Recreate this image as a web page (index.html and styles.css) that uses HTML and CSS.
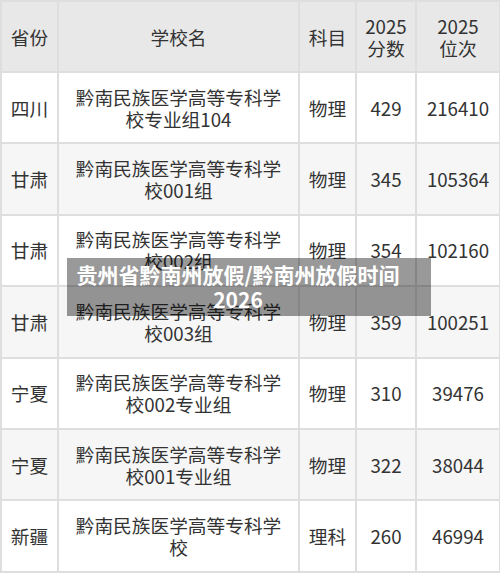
FILE: index.html
```html
<!DOCTYPE html>
<html lang="zh">
<head>
<meta charset="utf-8">
<link rel="stylesheet" href="styles.css">
</head>
<body>
<div class="page">
  <table class="scores">
    <colgroup>
      <col class="c-prov"><col class="c-school"><col class="c-subj"><col class="c-score"><col class="c-rank">
    </colgroup>
    <thead>
      <tr class="head"><th>省份</th><th>学校名</th><th>科目</th><th>2025<br>分数</th><th>2025<br>位次</th></tr>
    </thead>
    <tbody>
      <tr><td>四川</td><td>黔南民族医学高等专科学校专业组104</td><td>物理</td><td>429</td><td>216410</td></tr>
      <tr class="alt"><td>甘肃</td><td>黔南民族医学高等专科学校001组</td><td>物理</td><td>345</td><td>105364</td></tr>
      <tr><td>甘肃</td><td>黔南民族医学高等专科学校002组</td><td>物理</td><td>354</td><td>102160</td></tr>
      <tr class="alt"><td>甘肃</td><td>黔南民族医学高等专科学校003组</td><td>物理</td><td>359</td><td>100251</td></tr>
      <tr><td>宁夏</td><td>黔南民族医学高等专科学校002专业组</td><td>物理</td><td>310</td><td>39476</td></tr>
      <tr class="alt"><td>宁夏</td><td>黔南民族医学高等专科学校001专业组</td><td>物理</td><td>322</td><td>38044</td></tr>
      <tr><td>新疆</td><td>黔南民族医学高等专科学校</td><td>理科</td><td>260</td><td>46994</td></tr>
    </tbody>
  </table>
  <div class="banner">贵州省黔南州放假/黔南州放假时间2026</div>
</div>
</body>
</html>
```
FILE: styles.css
```css
html, body {
  margin: 0;
  padding: 0;
  background: #ffffff;
  overflow: hidden;
}
.page {
  position: relative;
  width: 500px;
  height: 574px;
  overflow: hidden;
}
.scores {
  border-collapse: collapse;
  table-layout: fixed;
  width: 499px;
  font-family: "Noto Sans CJK SC", "Noto Sans", sans-serif;
  font-size: 18.7px;
  line-height: 22px;
  color: #333333;
}
.c-prov { width: 57px; }
.c-school { width: 241px; }
.c-subj { width: 57px; }
.c-score { width: 60px; }
.c-rank { width: 84px; }
.scores th, .scores td {
  border: 2px solid #dedede;
  text-align: center;
  vertical-align: middle;
  padding: 0;
  font-weight: normal;
  overflow: hidden;
}
.scores td:nth-child(2) {
  padding: 0 16px;
}
.head th {
  background: #e8e8e8;
  height: 69px;
}
.scores tbody tr {
  height: 71.4px;
  background: #ffffff;
}
.scores tbody tr.alt {
  background: #f6f6f6;
}
.banner {
  position: absolute;
  left: 67px;
  top: 258px;
  width: 364px;
  height: 58px;
  box-sizing: border-box;
  padding: 4px 22px 4px 0;
  background: rgba(0, 0, 0, 0.4);
  color: #ffffff;
  font-family: "Noto Sans CJK SC", "Noto Sans", sans-serif;
  font-weight: bold;
  font-size: 21px;
  line-height: 25px;
  text-align: center;
}
```
